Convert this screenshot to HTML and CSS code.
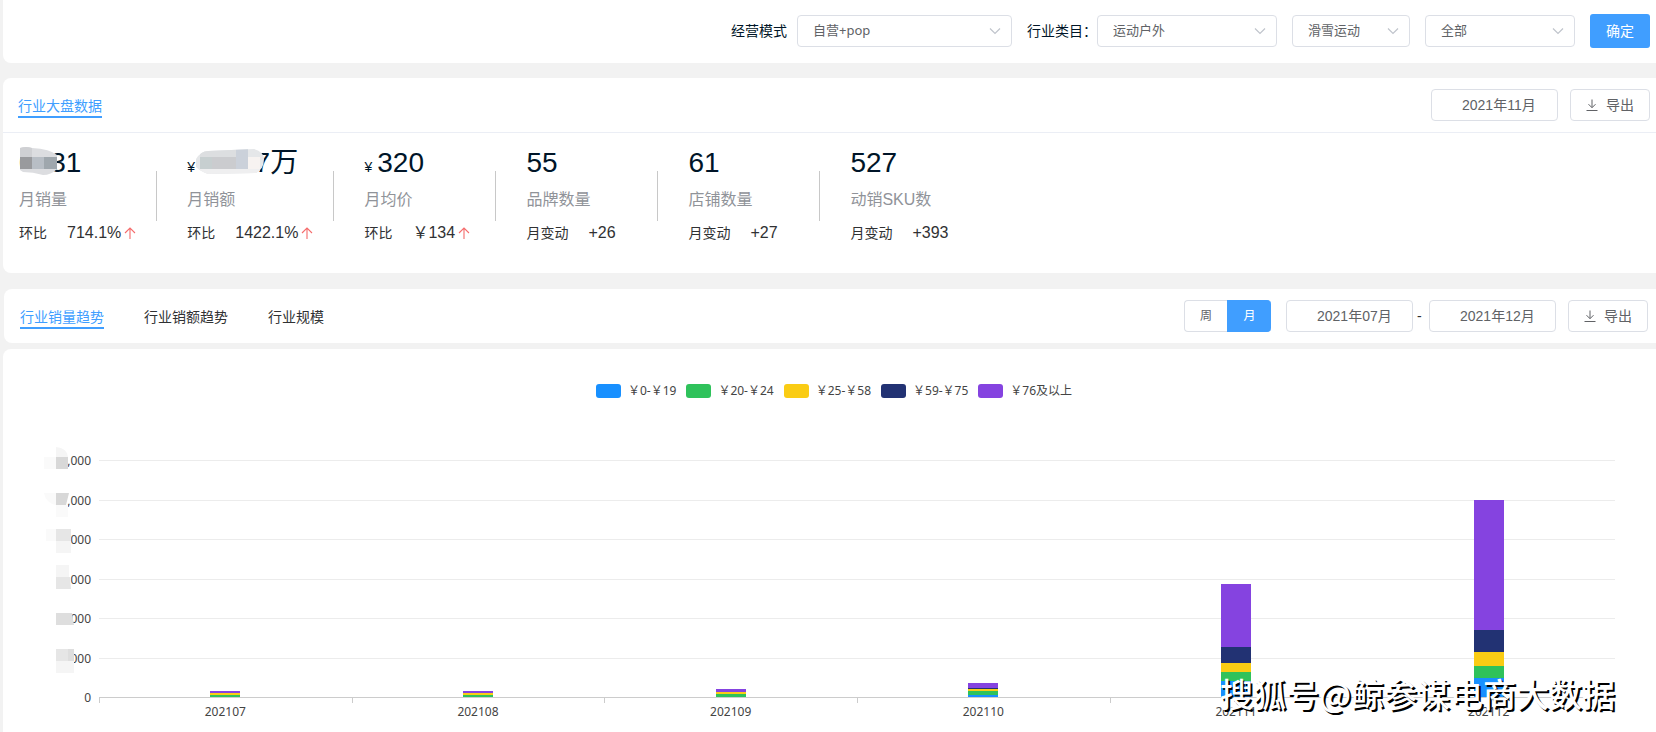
FILE: index.html
```html
<!DOCTYPE html>
<html lang="zh-CN">
<head>
<meta charset="utf-8">
<title>行业大盘数据</title>
<link rel="stylesheet" href="styles.css">
</head>
<body>
<svg class="defs" aria-hidden="true">
  <symbol id="chevron" viewBox="0 0 12 8"><path d="M1 1.5l5 5 5-5" fill="none" stroke="#c0c4cc" stroke-width="1.2"/></symbol>
  <symbol id="download" viewBox="0 0 12 12"><path d="M6 .5v8M2.500 5.200L6 8.700l3.500-3.500M.5 11.500h11" fill="none" stroke="#606266" stroke-width="1"/></symbol>
  <symbol id="up" viewBox="0 0 12 12"><path d="M6 12V1M1 6l5-5 5 5" fill="none" stroke="#f56c6c" stroke-width="1.1"/></symbol>
</svg>

<form class="card filters">
  <div class="field">
    <label class="mode-label" for="mode">经营模式</label>
    <span class="select mode"><select id="mode"><option>自营+pop</option></select><svg><use href="#chevron"/></svg></span>
  </div>
  <div class="field">
    <label for="cat1">行业类目：</label>
    <span class="select cat1"><select id="cat1"><option>运动户外</option></select><svg><use href="#chevron"/></svg></span>
  </div>
  <span class="select cat2"><select aria-label="二级类目"><option>滑雪运动</option></select><svg><use href="#chevron"/></svg></span>
  <span class="select cat3"><select aria-label="三级类目"><option>全部</option></select><svg><use href="#chevron"/></svg></span>
  <button class="submit" type="button">确定</button>
</form>

<section class="card overview">
  <header class="bar">
    <a class="tab active" href="#overview">行业大盘数据</a>
    <div class="tools">
      <input class="date" type="text" aria-label="月份" value="2021年11月">
      <button class="export" type="button"><svg><use href="#download"/></svg>导出</button>
    </div>
  </header>
  <ul class="stats">
    <li class="stat">
      <p class="number">0031
        <svg class="mask mask-volume" viewBox="0 0 37 28"><clipPath id="m1"><path d="M0 1Q6-1 12 1Q30 2 37 8V22Q31 28 23 28Q13 25 3 25L0 23Z"/></clipPath><g clip-path="url(#m1)"><path fill="#dcdde0" d="M0 0h37v28H0z"/><path fill="#cfd0d3" d="M0 0h12v10H0z"/><path fill="#999a9d" d="M0 10h12v12H0z"/><path fill="#b8bec5" d="M12 10h12v12H12z"/><path fill="#9fa7ad" d="M24 10h13v12H24z"/></g></svg>
      </p>
      <p class="name">月销量</p>
      <p class="change"><span>环比</span><b>714.1%</b><svg><use href="#up"/></svg></p>
    </li>
    <li class="stat">
      <p class="number money"><small>¥</small>000.7万
        <svg class="mask mask-amount" viewBox="0 0 68 26"><clipPath id="m2"><path d="M0 10Q5 2 12 2L58 0Q68 3 68 10Q68 20 60 24L12 25Q4 22 0 18Z"/></clipPath><g clip-path="url(#m2)"><path fill="#e5e7e9" d="M0 0h68v26H0z"/><path fill="#dcdee0" d="M4 0h36v8H4z"/><path fill="#c7cfd0" d="M4 8h12v12H4z"/><path fill="#cbcccf" d="M16 8h24v12H16z"/><path fill="#cbd1da" d="M40 0h12v20H40z"/><path fill="#f7f3f1" d="M52 8h12v12H52z"/><path fill="#efeff0" d="M4 20h60v6H4z"/></g></svg>
      </p>
      <p class="name">月销额</p>
      <p class="change"><span>环比</span><b>1422.1%</b><svg><use href="#up"/></svg></p>
    </li>
    <li class="stat">
      <p class="number money"><small>¥</small>320</p>
      <p class="name">月均价</p>
      <p class="change"><span>环比</span><b>￥134</b><svg><use href="#up"/></svg></p>
    </li>
    <li class="stat">
      <p class="number">55</p>
      <p class="name">品牌数量</p>
      <p class="change"><span>月变动</span><b>+26</b></p>
    </li>
    <li class="stat">
      <p class="number">61</p>
      <p class="name">店铺数量</p>
      <p class="change"><span>月变动</span><b>+27</b></p>
    </li>
    <li class="stat">
      <p class="number">527</p>
      <p class="name">动销SKU数</p>
      <p class="change"><span>月变动</span><b>+393</b></p>
    </li>
  </ul>
</section>

<section class="card bar trend">
  <nav class="tabs">
    <a class="tab active" href="#volume">行业销量趋势</a>
    <a class="tab" href="#amount">行业销额趋势</a>
    <a class="tab" href="#scale">行业规模</a>
  </nav>
  <div class="tools">
    <div class="segmented"><button type="button">周</button><button class="on" type="button">月</button></div>
    <div class="range">
      <input class="date" type="text" aria-label="开始月份" value="2021年07月">
      <span>-</span>
      <input class="date" type="text" aria-label="结束月份" value="2021年12月">
    </div>
    <button class="export" type="button"><svg><use href="#download"/></svg>导出</button>
  </div>
</section>

<section class="card chart">
  <ul class="legend">
    <li><i class="c1"></i>￥0-￥19</li>
    <li><i class="c2"></i>￥20-￥24</li>
    <li><i class="c3"></i>￥25-￥58</li>
    <li><i class="c4"></i>￥59-￥75</li>
    <li><i class="c5"></i>￥76及以上</li>
  </ul>
  <div class="graph">
    <div class="yaxis">
      <span>,000</span><span>,000</span><span>000</span><span>000</span><span>000</span><span>000</span><span>0</span>
      <svg class="mask mask-axis" viewBox="0 0 31 228">
        <path fill="#fafafa" d="M0 11h12v12H0zM0 47h12v12Q2 57 0 47zM2 83h10v12H2zM12 59h12v12H12z"/>
        <path fill="#f5f5f5" d="M12 1q11 1 12 10H12zM12 95h15v12H12zM12 119h13v12H12zM12 215h18v12H12z"/>
        <path fill="#d8d8d8" d="M12 11h12v12H12zM12 47h13l-3 12H12z"/>
        <path fill="#e6e6e6" d="M12 83h15v12H12zM12 131h14l1 12H12zM12 203h18v12H12z"/>
        <path fill="#dedede" d="M12 167h16l2 12H12zM24 203h6v12h-6z"/>
      </svg>
    </div>
    <div class="plot">
      <div class="grid"><i></i><i></i><i></i><i></i><i></i><i></i></div>
      <div class="bars">
        <div class="stack"><i class="c5" style="height:2px"></i><i class="c3" style="height:2px"></i><i class="c2" style="height:2px"></i></div>
        <div class="stack"><i class="c5" style="height:2px"></i><i class="c3" style="height:2px"></i><i class="c2" style="height:2px"></i></div>
        <div class="stack"><i class="c5" style="height:3px"></i><i class="c3" style="height:2px"></i><i class="c2" style="height:3px"></i></div>
        <div class="stack"><i class="c5" style="height:5px"></i><i class="c4" style="height:1px"></i><i class="c3" style="height:2px"></i><i class="c2" style="height:4px"></i><i class="c1" style="height:2px"></i></div>
        <div class="stack"><i class="c5" style="height:63px"></i><i class="c4" style="height:16px"></i><i class="c3" style="height:9px"></i><i class="c2" style="height:9px"></i><i class="c1" style="height:16px"></i></div>
        <div class="stack"><i class="c5" style="height:130px"></i><i class="c4" style="height:22px"></i><i class="c3" style="height:14px"></i><i class="c2" style="height:12px"></i><i class="c1" style="height:19px"></i></div>
      </div>
      <div class="xaxis"><span>202107</span><span>202108</span><span>202109</span><span>202110</span><span>202111</span><span>202112</span></div>
      <p class="watermark">搜狐号@鲸参谋电商大数据</p>
    </div>
  </div>
</section>
</body>
</html>
```
FILE: styles.css
```css
* { box-sizing: border-box; }

body {
  margin: 0;
  min-height: 100vh;
  display: flex;
  flex-direction: column;
  overflow: hidden;
  background: #f2f2f2;
  color: #303133;
  font: 14px/20px "Liberation Sans", "Noto Sans CJK SC", sans-serif;
}

ul, p { margin: 0; padding: 0; list-style: none; }
a { color: inherit; text-decoration: none; }
button, input, select { font: inherit; color: #606266; }
.defs { position: absolute; width: 0; height: 0; }

.card {
  margin-left: 3px;
  background: #fff;
  border-radius: 8px 0 0 8px;
}

/* filters */
.filters {
  display: flex;
  justify-content: flex-end;
  align-items: center;
  gap: 15px;
  height: 63px;
  padding: 0 6px 2px 0;
  border-radius: 0 0 0 8px;
  color: #001528;
}
.field { display: flex; align-items: center; }
.mode-label { margin-right: 10px; }
.select { position: relative; display: block; }
.select select {
  width: 100%;
  height: 32px;
  padding: 0 30px 2px 15px;
  border: 1px solid #dcdfe6;
  border-radius: 4px;
  background: #fff;
  appearance: none;
  font: 13px/20px "Noto Sans", "Noto Sans CJK SC", sans-serif;
}
.select svg {
  position: absolute;
  right: 11px;
  top: 12px;
  width: 12px;
  height: 8px;
  pointer-events: none;
}
.mode { width: 215px; }
.cat1 { width: 180px; }
.cat2 { width: 118px; }
.cat3 { width: 150px; }
.submit {
  width: 60px;
  height: 34px;
  padding: 0;
  border: 0;
  border-radius: 3px;
  background: #409eff;
  color: #fff;
}

/* headers with tabs and tools */
.bar {
  display: flex;
  justify-content: space-between;
  align-items: center;
  height: 54px;
}
.tabs { display: flex; gap: 40px; }
.tab { padding-top: 4px; border-bottom: 2px solid transparent; }
.tab.active { color: #409eff; border-color: #409eff; }
.tools { display: flex; align-items: center; }
.date {
  width: 127px;
  height: 32px;
  padding: 0 10px 2px 30px;
  border: 1px solid #dcdfe6;
  border-radius: 4px;
  background: #fff;
}
.export {
  display: flex;
  align-items: center;
  justify-content: center;
  gap: 8px;
  width: 80px;
  height: 32px;
  margin-left: 12px;
  padding: 0;
  border: 1px solid #dcdfe6;
  border-radius: 4px;
  background: #fff;
}
.export svg { width: 12px; height: 12px; }

/* overview */
.overview { height: 195px; margin-top: 15px; }
.overview .bar {
  height: 55px;
  padding: 0 6px 0 15px;
  border-bottom: 1px solid #ebeef5;
}
.stats { display: flex; gap: 30px; padding: 14px 16px; }
.stat { position: relative; min-width: 132px; padding-right: 21px; }
.stat:not(:last-child)::after {
  content: "";
  position: absolute;
  right: 0;
  top: 24px;
  width: 1px;
  height: 50px;
  background: #c8c8c8;
}
.number {
  position: relative;
  color: #001528;
  font-size: 28px;
  line-height: 32px;
  white-space: nowrap;
}
.number small { margin-right: 5px; font-size: 14px; line-height: 14px; }
.name { margin-top: 9px; color: #909399; font-size: 16px; line-height: 24px; }
.change { display: flex; align-items: center; margin-top: 9px; line-height: 24px; }
.change b { margin-left: 20px; font-size: 16px; font-weight: 400; }
.change svg { width: 12px; height: 12px; margin-left: 3px; }

.mask { position: absolute; }
.mask-volume { left: 1px; top: 0; width: 37px; height: 28px; }
.mask-amount { left: 9px; top: 2px; width: 68px; height: 26px; }

/* trend */
.trend { margin: 16px 0 6px 4px; padding: 0 8px 0 16px; }
.segmented { display: flex; margin-right: 15px; }
.segmented button {
  width: 43px;
  height: 32px;
  padding: 0;
  border: 1px solid #dcdfe6;
  border-right: 0;
  border-radius: 4px 0 0 4px;
  background: #fff;
  font-size: 12px;
}
.segmented .on {
  width: 44px;
  border-color: #409eff;
  border-radius: 0 4px 4px 0;
  background: #409eff;
  color: #fff;
}
.range { display: flex; align-items: center; }
.range span { width: 16px; padding-left: 4px; }

/* chart */
.chart {
  flex: 1;
  padding: 32px 41px 10px 16px;
  border-radius: 8px 0 0 0;
  color: #444;
  font: 12px/20px "Noto Sans", "Noto Sans CJK SC", sans-serif;
}
.legend { display: flex; justify-content: center; gap: 10px; padding-left: 34px; }
.legend li { display: flex; align-items: center; gap: 7px; }
.legend i { width: 25px; height: 14px; border-radius: 3px; }
.c1 { background: #1890ff; }
.c2 { background: #2fc25b; }
.c3 { background: #facc14; }
.c4 { background: #223273; }
.c5 { background: #8543e0; }

.graph { display: flex; gap: 8px; margin-top: 59px; }
.yaxis {
  position: relative;
  display: flex;
  flex-direction: column;
  justify-content: space-between;
  width: 72px;
  height: 257px;
  margin-top: -9px;
  text-align: right;
}
.mask-axis { left: 25px; top: -5px; width: 31px; height: 228px; }
.plot {
  position: relative;
  flex: 1;
  display: grid;
  grid-template-rows: 238px auto;
}
.grid, .bars { grid-area: 1 / 1; }
.grid { display: flex; flex-direction: column; border-bottom: 1px solid #ccc; }
.grid i { flex: 1; border-top: 1px solid #ececec; }
.bars { display: grid; grid-template-columns: repeat(6, 1fr); padding-bottom: 1px; }
.stack { display: flex; flex-direction: column; justify-content: flex-end; align-items: center; }
.stack i { width: 30px; }
.xaxis { display: grid; grid-template-columns: repeat(6, 1fr); text-align: center; }
.xaxis span {
  padding-top: 4px;
  background: linear-gradient(#ccc, #ccc) left top / 1px 5px no-repeat;
}
.watermark {
  position: absolute;
  right: 0;
  bottom: 7px;
  color: #fff;
  font: 500 33px/44px "Noto Sans CJK SC", sans-serif;
  text-shadow: 2px 2px 0 #000;
  white-space: nowrap;
}
```
